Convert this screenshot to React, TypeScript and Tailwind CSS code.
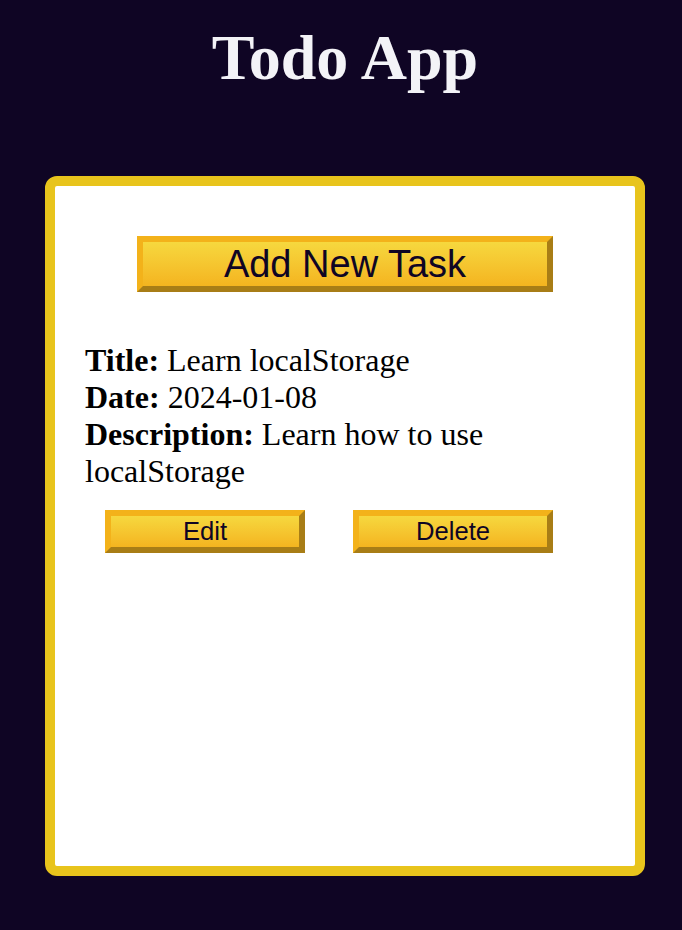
export default function App() {
  const btn =
    "border-[6px] border-solid border-t-[#f3b21a] border-l-[#f3b21a] border-b-[#a87d16] border-r-[#a87d16] bg-gradient-to-b from-[#f6d83e] to-[#f4b41f] text-[#0f0524] font-['Liberation_Sans',Arial,sans-serif] leading-none";

  return (
    <div className="min-h-[930px] bg-[#0f0524] pt-[22px] font-['Liberation_Serif','Times_New_Roman',serif]">
      <div className="ml-[45px] w-[600px]">
        <h1 className="text-center text-[64px] font-bold leading-[72px] text-[#f3f3f7]">Todo App</h1>
        <div className="mt-[82px] h-[700px] rounded-[12px] border-[10px] border-[#e8c41c] bg-white px-[30px] pt-[40px]">
          <div className="flex justify-center pt-[10px]">
            <button className={`${btn} h-[56px] w-[416px] text-[38px]`}>Add New Task</button>
          </div>
          <div className="mt-[50px] text-[32px] leading-[37px] text-black">
            <div>
              <b>Title:</b> Learn localStorage
            </div>
            <div>
              <b>Date:</b> 2024-01-08
            </div>
            <div>
              <b>Description:</b> Learn how to use localStorage
            </div>
          </div>
          <div className="mt-[20px] flex gap-[48px] pl-[20px]">
            <button className={`${btn} h-[43px] w-[200px] text-[25.6px]`}>Edit</button>
            <button className={`${btn} h-[43px] w-[200px] text-[25.6px]`}>Delete</button>
          </div>
        </div>
      </div>
    </div>
  );
}
